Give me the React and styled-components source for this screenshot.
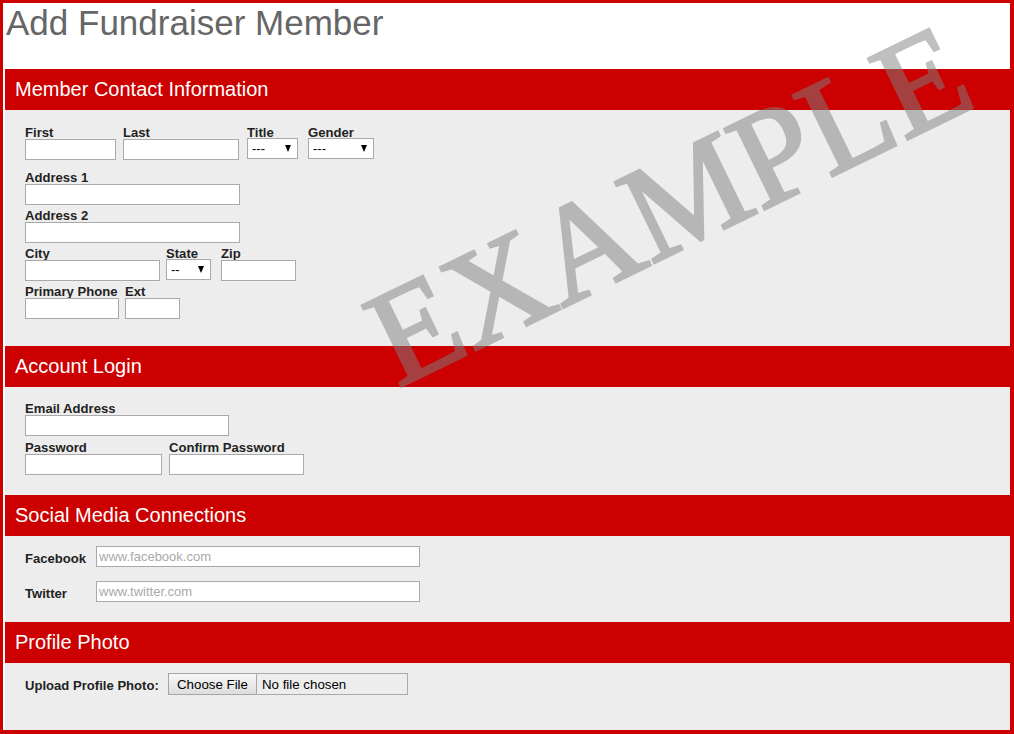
import React from 'react'
import styled, { createGlobalStyle } from 'styled-components'

const GlobalStyle = createGlobalStyle`
	html, body {
		margin: 0;
		padding: 0;
		background: #fff;
	}
	body {
		font-family: "Liberation Sans", Arial, sans-serif;
	}
`

const Frame = styled.div`
	position: relative;
	box-sizing: border-box;
	width: 1014px;
	height: 734px;
	overflow: hidden;
	border-style: solid;
	border-color: #cc0000;
	border-width: 3px 4px 4px 3px;
	padding-left: 2px;
	background: #fff;
	display: flex;
	flex-direction: column;
`

const PageTitle = styled.h1`
	margin: 0 0 26px 1px;
	font-size: 35px;
	line-height: 40px;
	font-weight: normal;
	color: #666;
`

const SectionHeader = styled.h2`
	margin: 0;
	height: 41px;
	padding-left: 10px;
	background: #cc0000;
	color: #fff;
	font-size: 20px;
	line-height: 41px;
	font-weight: normal;
`

const SectionBody = styled.div`
	background: #ededed;
	padding: ${p => p.$pt}px 0 ${p => p.$pb}px 20px;
	flex: ${p => (p.$grow ? 1 : 'none')};
`

const FieldRow = styled.div`
	display: flex;
	align-items: flex-start;
	margin-bottom: ${p => p.$mb || 0}px;
`

const Field = styled.div`
	display: flex;
	flex-direction: column;
	margin-right: ${p => p.$mr || 0}px;
`

const Label = styled.label`
	display: block;
	font-size: 13.1px;
	line-height: 13px;
	font-weight: bold;
	color: #222;
	white-space: nowrap;
`

const TextInput = styled.input`
	box-sizing: border-box;
	width: ${p => p.$w}px;
	height: 21px;
	margin: 0;
	padding: 1px 2px;
	border: 1px solid #a9a9a9;
	background: #fff;
	font-family: "Liberation Sans", Arial, sans-serif;
	font-size: 13px;
	color: #000;
	outline: none;

	&::placeholder {
		color: #a9a9a9;
	}
`

const SelectWrap = styled.div`
	position: relative;
	width: ${p => p.$w}px;
	height: 21px;
	margin-top: -1px;
`

const Select = styled.select`
	appearance: none;
	box-sizing: border-box;
	width: 100%;
	height: 21px;
	margin: 0;
	padding: 0 0 0 4px;
	border: 1px solid #a9a9a9;
	border-radius: 0;
	background: #fff;
	font-family: "Liberation Sans", Arial, sans-serif;
	font-size: 13px;
	color: #000;
	outline: none;
`

const Arrow = styled.span`
	position: absolute;
	right: 7px;
	top: 7px;
	width: 0;
	height: 0;
	border-left: 3px solid transparent;
	border-right: 3px solid transparent;
	border-top: 7px solid #000;
	pointer-events: none;
`

const InlineRow = styled.div`
	display: flex;
	align-items: flex-start;
	margin-bottom: ${p => p.$mb || 0}px;
`

const InlineLabel = styled.label`
	width: ${p => p.$w}px;
	margin-top: 6px;
	font-size: 13.1px;
	line-height: 13px;
	font-weight: bold;
	color: #222;
	white-space: nowrap;
`

const FileBox = styled.div`
	box-sizing: border-box;
	display: flex;
	align-items: center;
	width: 240px;
	height: 22px;
	border: 1px solid #a9a9a9;
	background: #ededed;
`

const FileButton = styled.button`
	box-sizing: border-box;
	height: 22px;
	margin: -1px 0 0 -1px;
	padding: 0 8px;
	border: 1px solid #a6a6a6;
	border-radius: 2px;
	background: linear-gradient(#f8f8f8, #dddddd);
	font-family: "Liberation Sans", Arial, sans-serif;
	font-size: 13.3px;
	color: #000;
	align-self: flex-start;
`

const FileName = styled.span`
	margin-left: 5px;
	font-size: 13.3px;
	color: #000;
`

const Watermark = styled.div`
	position: absolute;
	left: 395px;
	top: 272px;
	font-family: "Liberation Serif", "Times New Roman", serif;
	font-size: 137px;
	line-height: 135px;
	color: #808080;
	-webkit-text-stroke: 3px #808080;
	opacity: 0.5;
	white-space: nowrap;
	transform-origin: 0 113px;
	transform: rotate(-26deg);
	pointer-events: none;
`

const Dropdown = ({ w, value }) => (
	<SelectWrap $w={w}>
		<Select defaultValue={value}>
			<option>{value}</option>
		</Select>
		<Arrow />
	</SelectWrap>
)

const App = () => (
	<>
		<GlobalStyle />
		<Frame>
			<PageTitle>Add Fundraiser Member</PageTitle>

			<SectionHeader>Member Contact Information</SectionHeader>
			<SectionBody $pt={16} $pb={27}>
				<FieldRow $mb={11}>
					<Field $mr={7}>
						<Label>First</Label>
						<TextInput $w={91} />
					</Field>
					<Field $mr={8}>
						<Label>Last</Label>
						<TextInput $w={116} />
					</Field>
					<Field $mr={10}>
						<Label>Title</Label>
						<Dropdown w={51} value="---" />
					</Field>
					<Field>
						<Label>Gender</Label>
						<Dropdown w={66} value="---" />
					</Field>
				</FieldRow>
				<FieldRow $mb={4}>
					<Field>
						<Label>Address 1</Label>
						<TextInput $w={215} />
					</Field>
				</FieldRow>
				<FieldRow $mb={4}>
					<Field>
						<Label>Address 2</Label>
						<TextInput $w={215} />
					</Field>
				</FieldRow>
				<FieldRow $mb={4}>
					<Field $mr={6}>
						<Label>City</Label>
						<TextInput $w={135} />
					</Field>
					<Field $mr={10}>
						<Label>State</Label>
						<Dropdown w={45} value="--" />
					</Field>
					<Field>
						<Label>Zip</Label>
						<TextInput $w={75} />
					</Field>
				</FieldRow>
				<FieldRow>
					<Field $mr={6}>
						<Label>Primary Phone</Label>
						<TextInput $w={94} />
					</Field>
					<Field>
						<Label>Ext</Label>
						<TextInput $w={55} />
					</Field>
				</FieldRow>
			</SectionBody>

			<SectionHeader>Account Login</SectionHeader>
			<SectionBody $pt={15} $pb={20}>
				<FieldRow $mb={5}>
					<Field>
						<Label>Email Address</Label>
						<TextInput $w={204} />
					</Field>
				</FieldRow>
				<FieldRow>
					<Field $mr={7}>
						<Label>Password</Label>
						<TextInput type="password" $w={137} />
					</Field>
					<Field>
						<Label>Confirm Password</Label>
						<TextInput type="password" $w={135} />
					</Field>
				</FieldRow>
			</SectionBody>

			<SectionHeader>Social Media Connections</SectionHeader>
			<SectionBody $pt={10} $pb={20}>
				<InlineRow $mb={14}>
					<InlineLabel $w={71}>Facebook</InlineLabel>
					<TextInput $w={324} placeholder="www.facebook.com" />
				</InlineRow>
				<InlineRow>
					<InlineLabel $w={71}>Twitter</InlineLabel>
					<TextInput $w={324} placeholder="www.twitter.com" />
				</InlineRow>
			</SectionBody>

			<SectionHeader>Profile Photo</SectionHeader>
			<SectionBody $pt={10} $pb={0} $grow>
				<InlineRow>
					<InlineLabel $w={143}>Upload Profile Photo:</InlineLabel>
					<FileBox>
						<FileButton type="button">Choose File</FileButton>
						<FileName>No file chosen</FileName>
					</FileBox>
				</InlineRow>
			</SectionBody>

			<Watermark>EXAMPLE</Watermark>
		</Frame>
	</>
)

export default App
